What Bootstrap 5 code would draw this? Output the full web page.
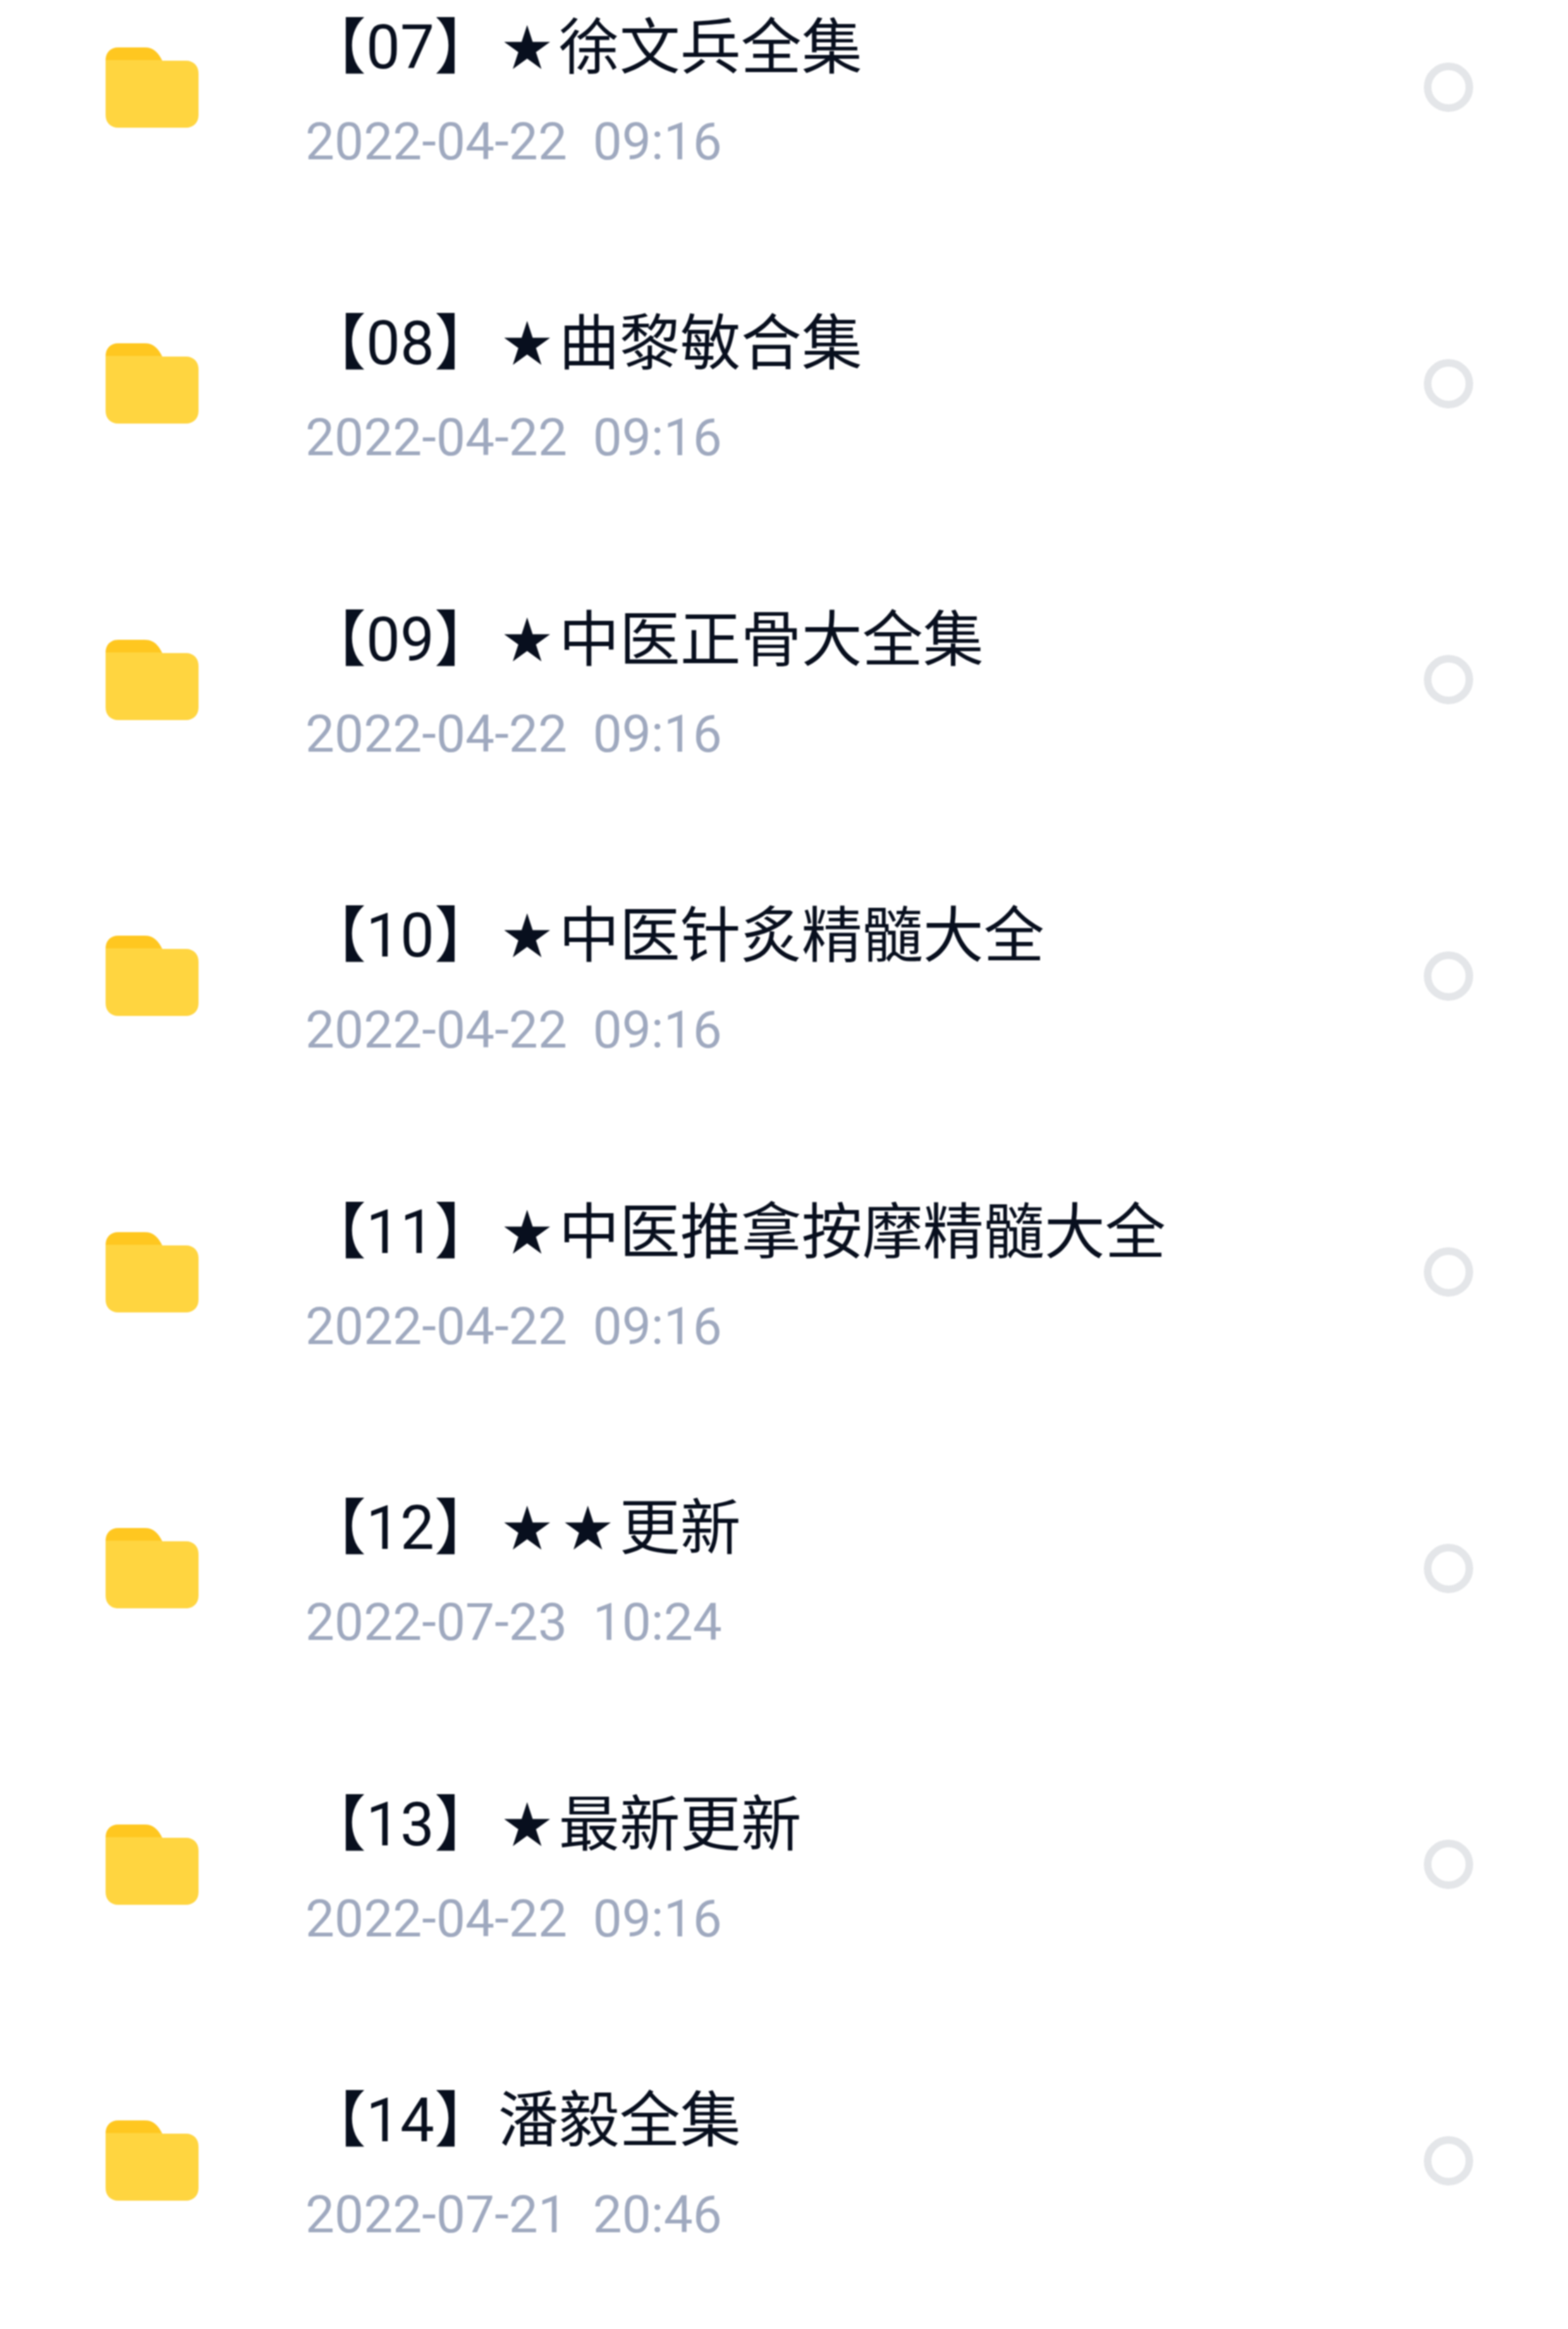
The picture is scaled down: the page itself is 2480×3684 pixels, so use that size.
<!DOCTYPE html>
<html lang="zh">
<head>
<meta charset="utf-8">
<title>文件列表</title>
<link href="https://cdn.jsdelivr.net/npm/bootstrap@5.3.0/dist/css/bootstrap.min.css" rel="stylesheet">
<style>
html,body{background:#fff;height:3684px;overflow:hidden}
.file-list{margin-top:-96px;filter:blur(1px)}
.file-row{height:468.5px;padding:0 150px 0 167px}
.folder-ico{width:147px;height:127px;flex:none;display:block}
.file-text{margin-left:169px;padding-top:10px;font-family:Roboto,"Noto Sans CJK SC",sans-serif}
.file-name{font-size:96px;line-height:120px;color:#080f1e;white-space:pre;word-spacing:-19px}
.star-mark{display:inline-block;width:96px;text-align:center;font-size:78px;line-height:1;vertical-align:4px;margin-left:-2px;margin-right:2px}
.file-time{font-size:82px;line-height:96px;color:#9fa9bf;white-space:pre;margin-top:41px}
.pick-ring{width:78px;height:78px;flex:none;border:12px solid #e4e6e9;border-radius:50%}
</style>
</head>
<body>
<main class="file-list d-flex flex-column">
<div class="file-row d-flex align-items-center"><svg class="folder-ico" viewBox="0 0 147 127"><path fill="#ffc720" d="M20 0H62C75 0 83 7 90 22L96 40H0V20C0 8 8 0 20 0Z"/><path fill="#ffd540" d="M0 20H88V21H127C139 21 147 29 147 41V107C147 119 139 127 127 127H20C8 127 0 119 0 107Z"/></svg><div class="file-text flex-grow-1"><div class="file-name">【07】 <span class="star-mark">★</span>徐文兵全集</div><div class="file-time">2022-04-22  09:16</div></div><div class="pick-ring"></div></div>
<div class="file-row d-flex align-items-center"><svg class="folder-ico" viewBox="0 0 147 127"><path fill="#ffc720" d="M20 0H62C75 0 83 7 90 22L96 40H0V20C0 8 8 0 20 0Z"/><path fill="#ffd540" d="M0 20H88V21H127C139 21 147 29 147 41V107C147 119 139 127 127 127H20C8 127 0 119 0 107Z"/></svg><div class="file-text flex-grow-1"><div class="file-name">【08】 <span class="star-mark">★</span>曲黎敏合集</div><div class="file-time">2022-04-22  09:16</div></div><div class="pick-ring"></div></div>
<div class="file-row d-flex align-items-center"><svg class="folder-ico" viewBox="0 0 147 127"><path fill="#ffc720" d="M20 0H62C75 0 83 7 90 22L96 40H0V20C0 8 8 0 20 0Z"/><path fill="#ffd540" d="M0 20H88V21H127C139 21 147 29 147 41V107C147 119 139 127 127 127H20C8 127 0 119 0 107Z"/></svg><div class="file-text flex-grow-1"><div class="file-name">【09】 <span class="star-mark">★</span>中医正骨大全集</div><div class="file-time">2022-04-22  09:16</div></div><div class="pick-ring"></div></div>
<div class="file-row d-flex align-items-center"><svg class="folder-ico" viewBox="0 0 147 127"><path fill="#ffc720" d="M20 0H62C75 0 83 7 90 22L96 40H0V20C0 8 8 0 20 0Z"/><path fill="#ffd540" d="M0 20H88V21H127C139 21 147 29 147 41V107C147 119 139 127 127 127H20C8 127 0 119 0 107Z"/></svg><div class="file-text flex-grow-1"><div class="file-name">【10】 <span class="star-mark">★</span>中医针炙精髓大全</div><div class="file-time">2022-04-22  09:16</div></div><div class="pick-ring"></div></div>
<div class="file-row d-flex align-items-center"><svg class="folder-ico" viewBox="0 0 147 127"><path fill="#ffc720" d="M20 0H62C75 0 83 7 90 22L96 40H0V20C0 8 8 0 20 0Z"/><path fill="#ffd540" d="M0 20H88V21H127C139 21 147 29 147 41V107C147 119 139 127 127 127H20C8 127 0 119 0 107Z"/></svg><div class="file-text flex-grow-1"><div class="file-name">【11】 <span class="star-mark">★</span>中医推拿按摩精髓大全</div><div class="file-time">2022-04-22  09:16</div></div><div class="pick-ring"></div></div>
<div class="file-row d-flex align-items-center"><svg class="folder-ico" viewBox="0 0 147 127"><path fill="#ffc720" d="M20 0H62C75 0 83 7 90 22L96 40H0V20C0 8 8 0 20 0Z"/><path fill="#ffd540" d="M0 20H88V21H127C139 21 147 29 147 41V107C147 119 139 127 127 127H20C8 127 0 119 0 107Z"/></svg><div class="file-text flex-grow-1"><div class="file-name">【12】 <span class="star-mark">★</span><span class="star-mark">★</span>更新</div><div class="file-time">2022-07-23  10:24</div></div><div class="pick-ring"></div></div>
<div class="file-row d-flex align-items-center"><svg class="folder-ico" viewBox="0 0 147 127"><path fill="#ffc720" d="M20 0H62C75 0 83 7 90 22L96 40H0V20C0 8 8 0 20 0Z"/><path fill="#ffd540" d="M0 20H88V21H127C139 21 147 29 147 41V107C147 119 139 127 127 127H20C8 127 0 119 0 107Z"/></svg><div class="file-text flex-grow-1"><div class="file-name">【13】 <span class="star-mark">★</span>最新更新</div><div class="file-time">2022-04-22  09:16</div></div><div class="pick-ring"></div></div>
<div class="file-row d-flex align-items-center"><svg class="folder-ico" viewBox="0 0 147 127"><path fill="#ffc720" d="M20 0H62C75 0 83 7 90 22L96 40H0V20C0 8 8 0 20 0Z"/><path fill="#ffd540" d="M0 20H88V21H127C139 21 147 29 147 41V107C147 119 139 127 127 127H20C8 127 0 119 0 107Z"/></svg><div class="file-text flex-grow-1"><div class="file-name">【14】 潘毅全集</div><div class="file-time">2022-07-21  20:46</div></div><div class="pick-ring"></div></div>
</main>
<script src="https://cdn.jsdelivr.net/npm/bootstrap@5.3.0/dist/js/bootstrap.bundle.min.js"></script>
</body>
</html>
